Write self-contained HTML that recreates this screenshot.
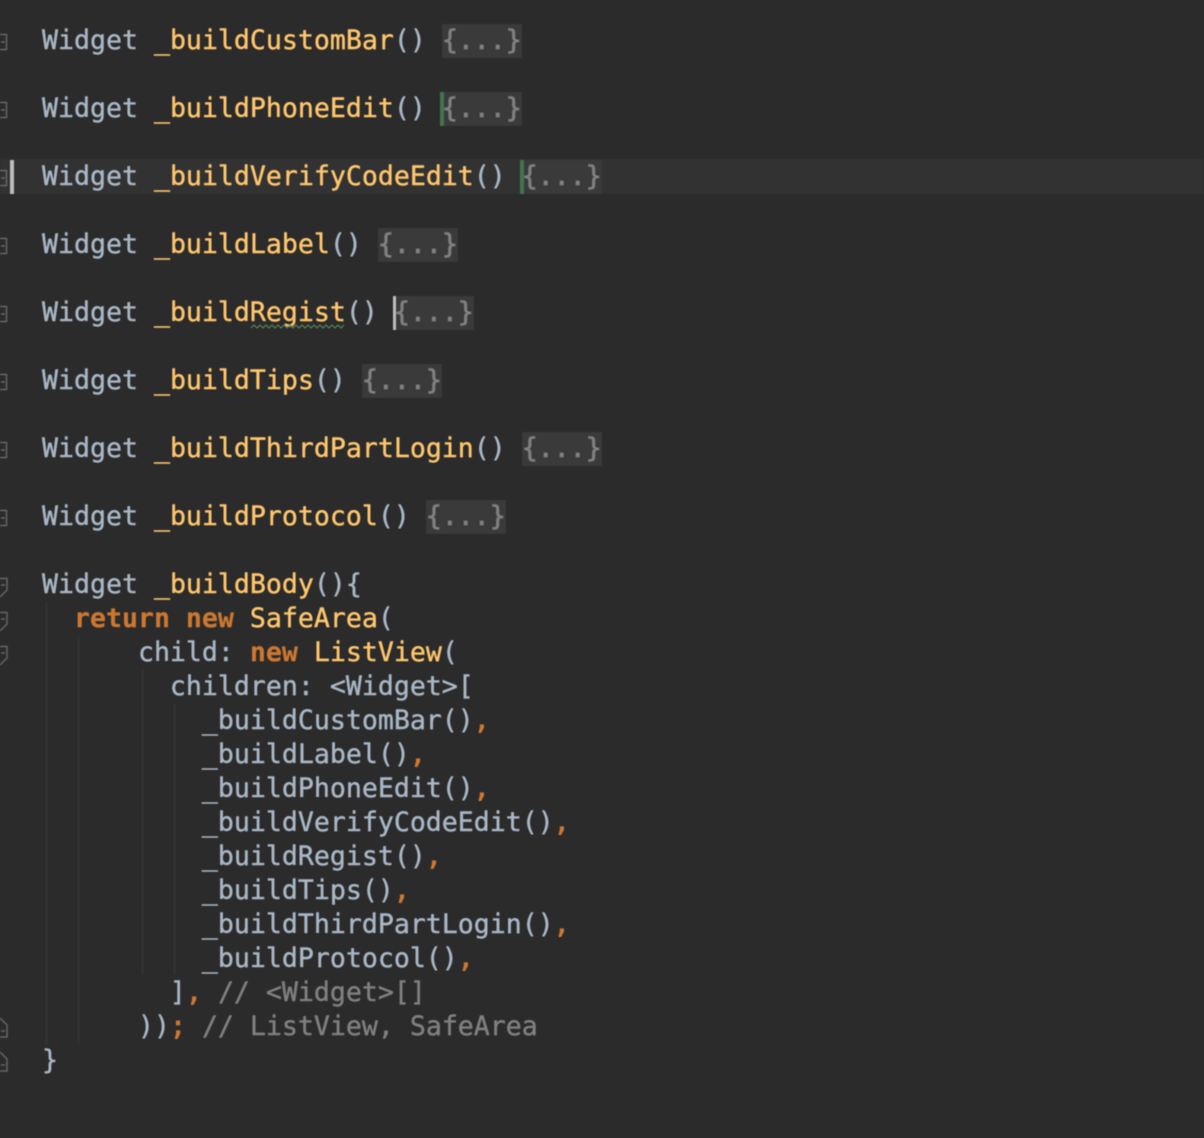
<!DOCTYPE html>
<html><head><meta charset="utf-8"><style>
html,body{margin:0;padding:0;background:#2b2b2b;width:1204px;height:1138px;overflow:hidden}
#e{position:relative;width:1204px;height:1138px;font-family:"DejaVu Sans Mono","Liberation Mono",monospace;font-size:26.57px;color:#a9b7c6;filter:blur(.4px)}
.l{position:absolute;left:42px;height:34px;line-height:34px;white-space:pre;-webkit-text-stroke:.4px currentColor}
.f{color:#ffc66d}.k{color:#cc7832;font-weight:bold;-webkit-text-stroke:.2px currentColor}.o{color:#cc7832;-webkit-text-stroke:.9px currentColor}.c{color:#808080}
.b{background:#3a3a3a;color:#808080;display:inline-block;height:34px;vertical-align:top;-webkit-text-stroke:.7px currentColor}
.a{position:absolute}
.g{position:absolute;width:1px;background:#383838}
svg{position:absolute;left:0;top:0}
</style></head><body><div id="e">
<div class="a" style="left:0;top:159px;width:1204px;height:35px;background:#323232"></div>
<div class="g" style="left:46px;top:602px;height:442px"></div>
<div class="g" style="left:78px;top:636px;height:408px"></div>
<div class="g" style="left:142px;top:669px;height:306px"></div>
<div class="g" style="left:174px;top:703px;height:272px"></div>
<div class="l" style="top:24px">Widget <span class="f">_buildCustomBar</span>() <span class="b">{...}</span></div>
<div class="l" style="top:92px">Widget <span class="f">_buildPhoneEdit</span>() <span class="b">{...}</span></div>
<div class="l" style="top:160px">Widget <span class="f">_buildVerifyCodeEdit</span>() <span class="b">{...}</span></div>
<div class="l" style="top:228px">Widget <span class="f">_buildLabel</span>() <span class="b">{...}</span></div>
<div class="l" style="top:296px">Widget <span class="f">_buildRegist</span>() <span class="b">{...}</span></div>
<div class="l" style="top:364px">Widget <span class="f">_buildTips</span>() <span class="b">{...}</span></div>
<div class="l" style="top:432px">Widget <span class="f">_buildThirdPartLogin</span>() <span class="b">{...}</span></div>
<div class="l" style="top:500px">Widget <span class="f">_buildProtocol</span>() <span class="b">{...}</span></div>
<div class="l" style="top:568px">Widget <span class="f">_buildBody</span>(){</div>
<div class="l" style="top:602px">  <span class="k">return new </span><span class="f">SafeArea</span>(</div>
<div class="l" style="top:636px">      child: <span class="k">new </span><span class="f">ListView</span>(</div>
<div class="l" style="top:670px">        children: &lt;Widget&gt;[</div>
<div class="l" style="top:704px">          _buildCustomBar()<span class="o">,</span></div>
<div class="l" style="top:738px">          _buildLabel()<span class="o">,</span></div>
<div class="l" style="top:772px">          _buildPhoneEdit()<span class="o">,</span></div>
<div class="l" style="top:806px">          _buildVerifyCodeEdit()<span class="o">,</span></div>
<div class="l" style="top:840px">          _buildRegist()<span class="o">,</span></div>
<div class="l" style="top:874px">          _buildTips()<span class="o">,</span></div>
<div class="l" style="top:908px">          _buildThirdPartLogin()<span class="o">,</span></div>
<div class="l" style="top:942px">          _buildProtocol()<span class="o">,</span></div>
<div class="l" style="top:976px">        ]<span class="o">,</span> <span class="c">// &lt;Widget&gt;[]</span></div>
<div class="l" style="top:1010px">      ))<span class="o">;</span> <span class="c">// ListView, SafeArea</span></div>
<div class="l" style="top:1044px">}</div>
<div class="a" style="left:10px;top:160px;width:4px;height:34px;background:#bdbdbd"></div>
<div class="a" style="left:520px;top:160px;width:4px;height:34px;background:#44744f"></div>
<div class="a" style="left:440px;top:92px;width:4px;height:34px;background:#44744f"></div>
<div class="a" style="left:393px;top:296px;width:3px;height:34px;background:#bdbdbd"></div>
<svg width="60" height="1138" fill="none" stroke="#666" stroke-width="1.5">
<path d="M0 34.5H6.500V49.500H0M1 42H5"/>
<path d="M0 102.500H6.500V117.500H0M1 110H5"/>
<path d="M0 170.500H6.500V185.500H0M1 178H5"/>
<path d="M0 238.500H6.500V253.500H0M1 246H5"/>
<path d="M0 306.500H6.500V321.500H0M1 314H5"/>
<path d="M0 374.500H6.500V389.500H0M1 382H5"/>
<path d="M0 442.500H6.500V457.500H0M1 450H5"/>
<path d="M0 510.500H6.500V525.500H0M1 518H5"/>
<path d="M0 578.500H7V590L0 597M1 585H5"/>
<path d="M0 612.500H7V624L0 631M1 619H5"/>
<path d="M0 646.500H7V658L0 665M1 653H5"/>
<path d="M0 1018L7 1025V1037H0M1 1031H5"/>
<path d="M0 1052L7 1059V1071H0M1 1065H5"/>
</svg>
<svg width="360" height="340" fill="none" stroke="#5f8a5f" stroke-width="1" style="left:0;top:0">
<path d="M251 328l3-3 3 3 3-3 3 3 3-3 3 3 3-3 3 3 3-3 3 3 3-3 3 3 3-3 3 3 3-3 3 3 3-3 3 3 3-3 3 3 3-3 3 3 3-3 3 3 3-3 3 3 3-3 3 3 3-3 3 3 3-3"/>
</svg>
</div></body></html>
